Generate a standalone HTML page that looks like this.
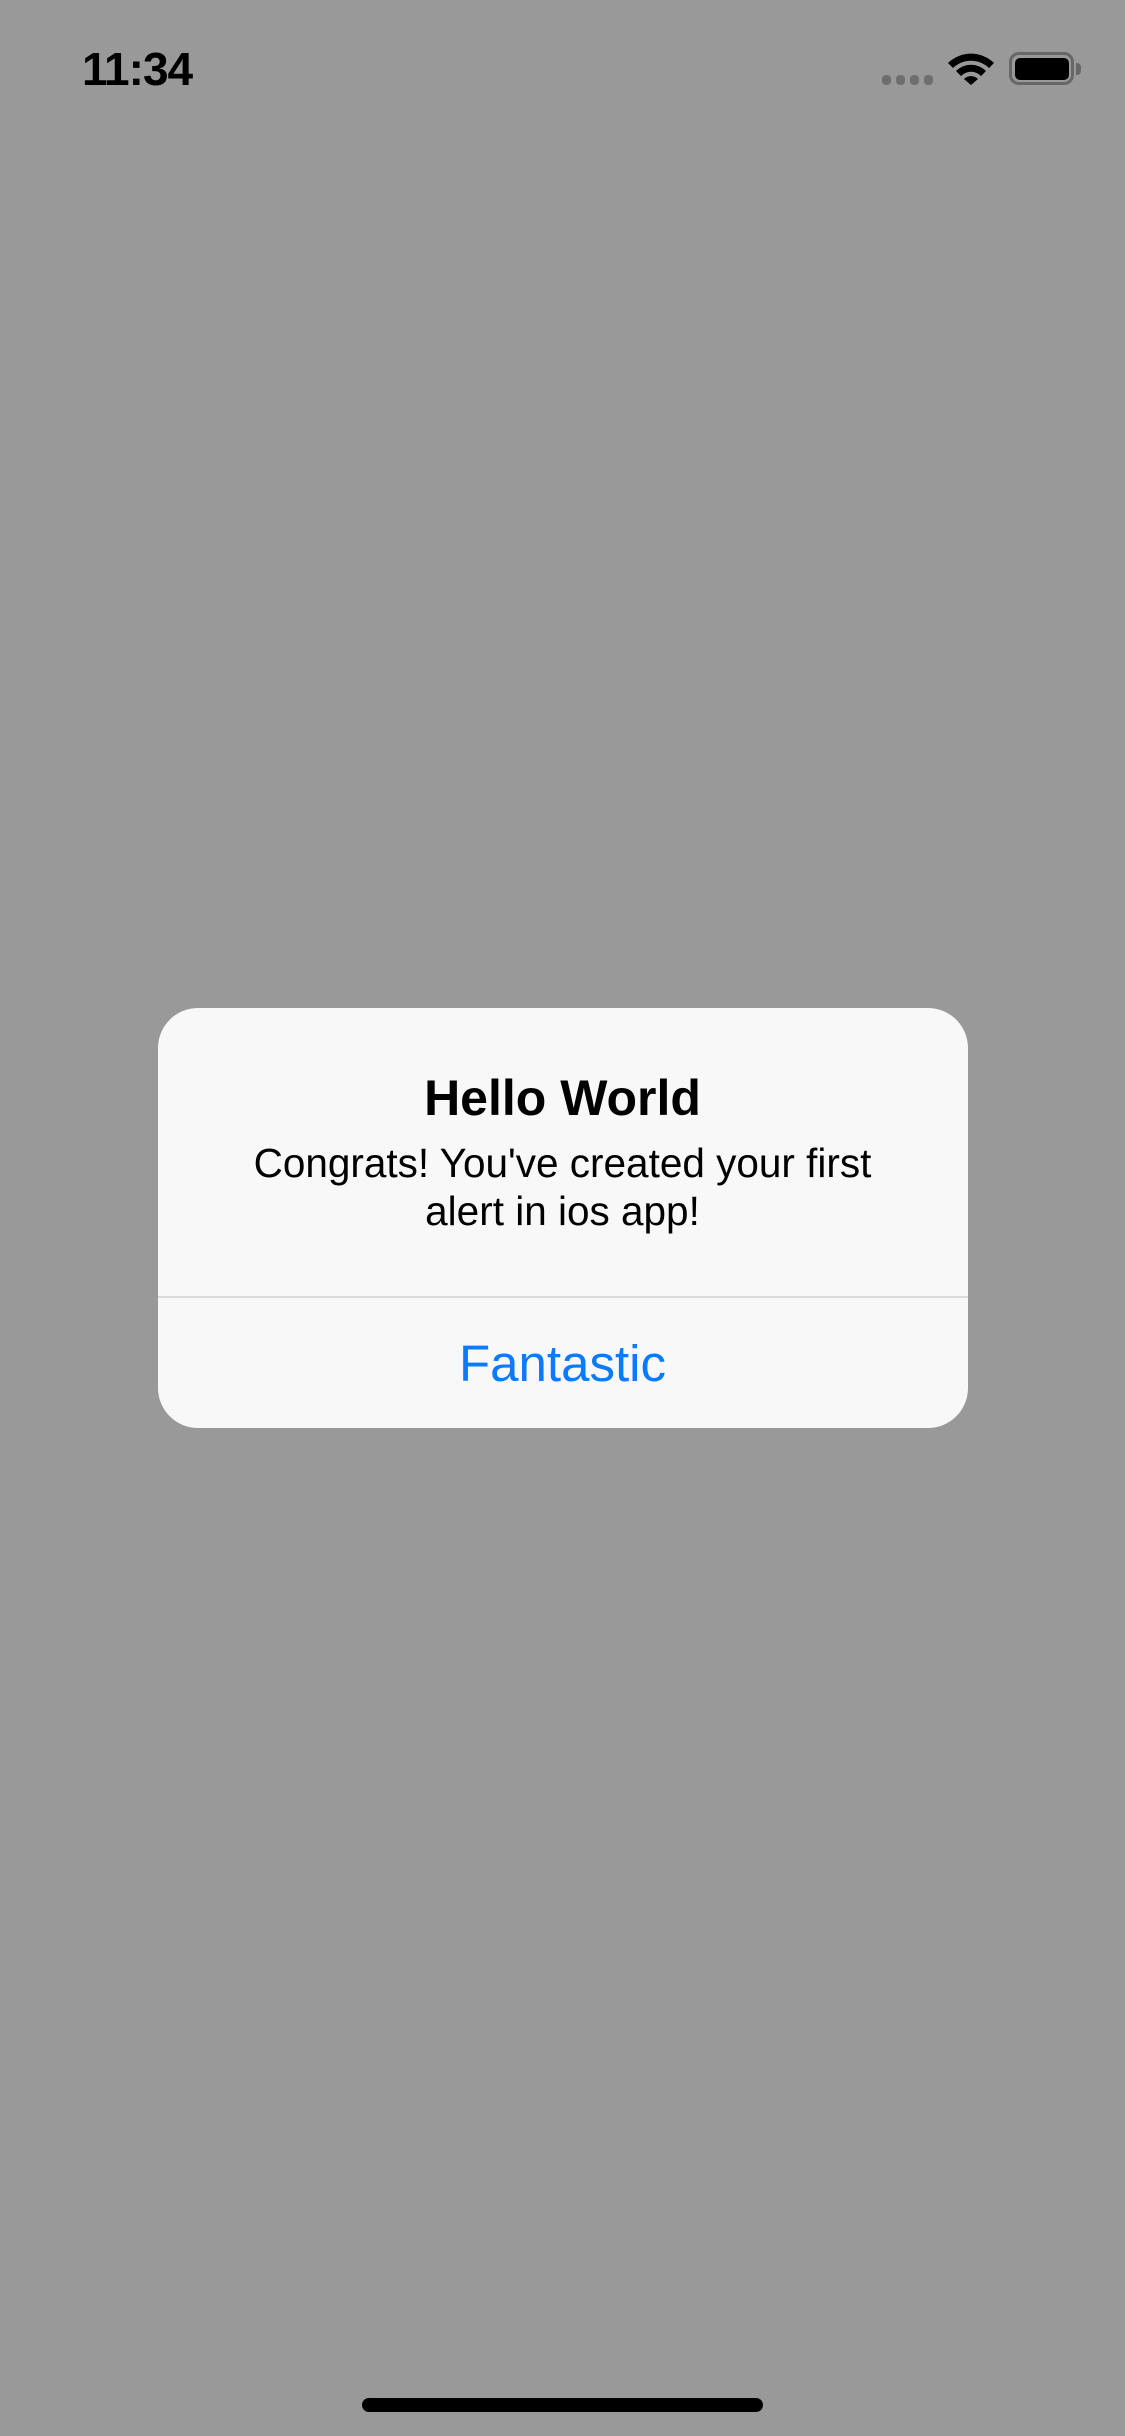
<!DOCTYPE html>
<html><head><meta charset="utf-8"><style>
html,body{margin:0;padding:0}
body{width:1125px;height:2436px;background:#999999;position:relative;overflow:hidden;font-family:"Liberation Sans",sans-serif}
.time{position:absolute;left:82px;top:44px;font-size:46px;font-weight:bold;color:#000;letter-spacing:-1px;line-height:50px}
.dot{position:absolute;top:75px;width:9px;height:10px;border-radius:4px;background:#6e6e6e}
.alert{position:absolute;left:158px;top:1008px;width:810px;height:420px;background:#f8f8f8;border-radius:40px;overflow:hidden}
.title{position:absolute;left:0;right:0;top:1068px;text-align:center;font-size:50px;font-weight:bold;color:#000;line-height:60px}
.msg{position:absolute;left:0;right:0;top:1139px;text-align:center;font-size:40.5px;color:#000;line-height:48px}
.sep{position:absolute;left:158px;width:810px;top:1296px;height:2px;background:#dadada}
.btn{position:absolute;left:0;right:0;top:1334px;text-align:center;font-size:51px;color:#0a7aff;line-height:60px}
.home{position:absolute;left:362px;top:2398px;width:401px;height:14px;border-radius:7px;background:#000}
</style></head><body>
<div class="time">11:34</div>
<div class="dot" style="left:882px"></div>
<div class="dot" style="left:896px"></div>
<div class="dot" style="left:910px"></div>
<div class="dot" style="left:924px"></div>
<svg style="position:absolute;left:946px;top:52px" width="50" height="34" viewBox="0 0 50 34">
<path d="M2 11 A33 33 0 0 1 48 11 L43 16 A26 26 0 0 0 7 16 Z" fill="#000"/>
<path d="M10 19 A21 21 0 0 1 40 19 L35 24 A14 14 0 0 0 15 24 Z" fill="#000"/>
<path d="M18 27 A10 10 0 0 1 32 27 L25 33 Z" fill="#000"/>
</svg>
<div style="position:absolute;left:1009px;top:52px;width:59px;height:27px;border:3px solid #676767;border-radius:10px"></div>
<div style="position:absolute;left:1015px;top:58px;width:54px;height:22px;background:#000;border-radius:5px"></div>
<div style="position:absolute;left:1076px;top:63px;width:5px;height:12px;background:#676767;border-radius:0 4px 4px 0"></div>
<div class="alert"></div>
<div class="title">Hello World</div>
<div class="msg">Congrats! You've created your first<br>alert in ios app!</div>
<div class="sep"></div>
<div class="btn">Fantastic</div>
<div class="home"></div>
</body></html>
